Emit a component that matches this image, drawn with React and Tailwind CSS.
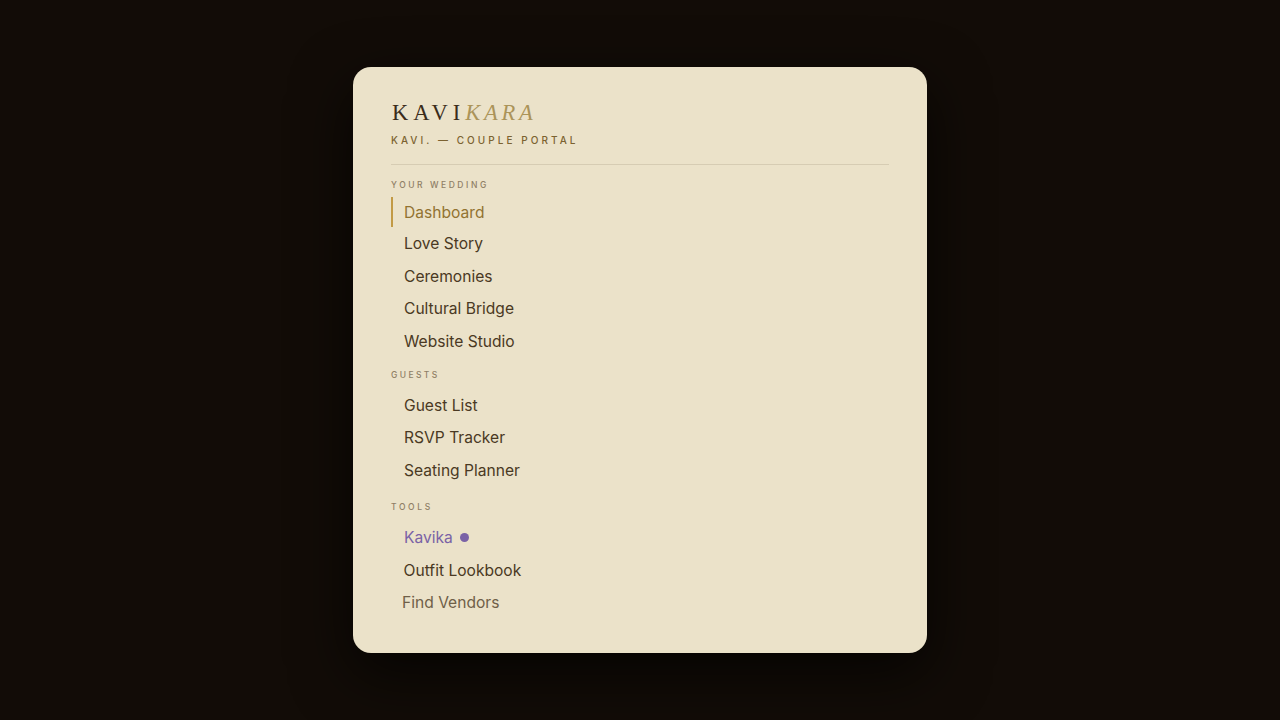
const groups = [
  {
    label: 'YOUR WEDDING',
    labelClass: 'tracking-[0.3em]',
    listClass: 'mt-[5px]',
    items: [
      { name: 'Dashboard', active: true },
      { name: 'Love Story' },
      { name: 'Ceremonies' },
      { name: 'Cultural Bridge' },
      { name: 'Website Studio' },
    ],
  },
  {
    label: 'GUESTS',
    labelClass: 'mt-[10.6px] tracking-[0.28em]',
    listClass: 'mt-[6.7px]',
    items: [{ name: 'Guest List' }, { name: 'RSVP Tracker' }, { name: 'Seating Planner' }],
  },
  {
    label: 'TOOLS',
    labelClass: 'mt-[13.2px] tracking-[0.31em]',
    listClass: 'mt-[7.2px]',
    items: [
      { name: 'Kavika', accent: true },
      { name: 'Outfit Lookbook', shift: 'pl-[12.5px]' },
      { name: 'Find Vendors', shift: 'pl-[11px]', muted: true },
    ],
  },
]

function NavItem({ item }) {
  let color = 'text-[#4a3923]'
  if (item.active) color = 'text-[#927331]'
  if (item.accent) color = 'text-[#7a62a6]'
  if (item.muted) color = 'text-[#6f5f48]'

  return (
    <a
      className={`flex items-center pt-[1px] text-[15.6px] font-normal ${item.shift || 'pl-[13px]'} ${color} ${
        item.active ? 'relative h-[30px]' : 'h-[32.6px]'
      }`}
    >
      {item.active && <span className="absolute left-0 top-0 w-[2px] h-[30px] bg-[#c29a45]" />}
      {item.name}
      {item.accent && <span className="ml-[7px] w-[9px] h-[9px] rounded-full bg-[#7a62a6]" />}
    </a>
  )
}

export default function App() {
  return (
    <div className="w-full h-[720px] bg-[#120c07] flex items-center justify-center overflow-hidden">
      <aside className="w-[574px] h-[586px] rounded-[18px] bg-[#ebe2c9] px-[38px] pt-[32px] shadow-[0_20px_60px_rgba(0,0,0,0.7)] font-['Inter',sans-serif]">
        <div className="pl-[1px] font-['Liberation_Serif',serif] text-[22.5px] leading-[28px] tracking-[0.22em] text-[#3a2c1a]">
          KAVI<em className="tracking-[0.17em] text-[#ab9459]">KARA</em>
        </div>
        <div className="mt-[6px] text-[10px] leading-[14px] font-medium tracking-[0.305em] text-[#7b6230]">
          KAVI. — COUPLE PORTAL
        </div>
        <div className="mt-[17px] mb-[13px] h-px bg-[#d6ccb3]" />
        <nav>
          {groups.map(group => (
            <div key={group.label}>
              <div className={`h-[14px] text-[8.5px] leading-[14px] font-medium text-[#8f7f66] ${group.labelClass}`}>
                {group.label}
              </div>
              <div className={group.listClass}>
                {group.items.map(item => (
                  <NavItem key={item.name} item={item} />
                ))}
              </div>
            </div>
          ))}
        </nav>
      </aside>
    </div>
  )
}
